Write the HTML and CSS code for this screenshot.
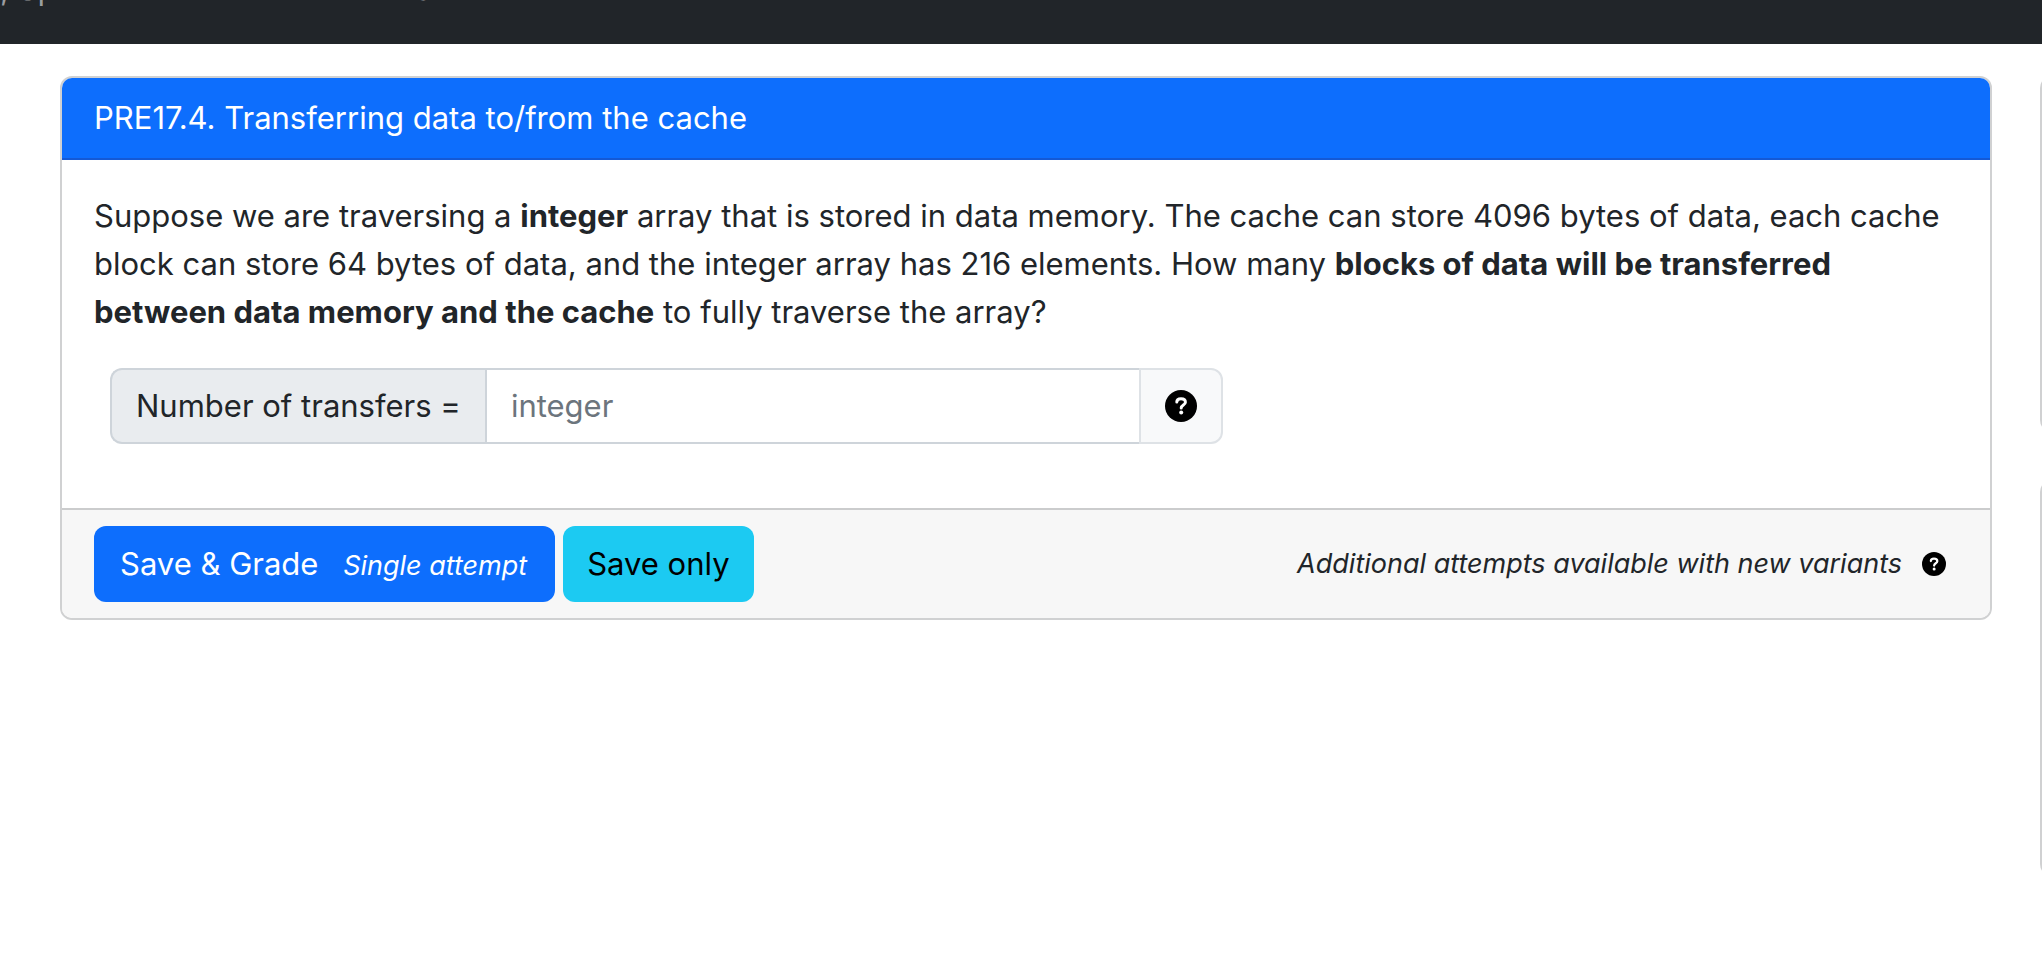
FILE: index.html
```html
<!DOCTYPE html>
<html lang="en">
<head>
<meta charset="utf-8">
<title>PRE17.4. Transferring data to/from the cache</title>
<link rel="stylesheet" href="styles.css">
</head>
<body>
<svg class="sprite" aria-hidden="true">
  <symbol id="question" viewBox="0 0 16 16">
    <circle cx="8" cy="8" r="8" fill="#000"/>
    <path d="M5.9 6C5.9 4.8 6.8 4.4 8 4.4S10.2 5 10.2 6.1C10.2 7.5 8.1 7.5 8.1 9" fill="none" stroke="#fff" stroke-width="1.5" stroke-linecap="round"/>
    <circle cx="8.1" cy="11.3" r="1" fill="#fff"/>
  </symbol>
</svg>
<nav class="navbar">
  <span class="navbar-text">, Sp25</span>
  <a class="nav-link" href="#">Assessments</a>
  <a class="nav-link" href="#">Gradebook</a>
</nav>
<div class="layout">
  <main class="card question-card">
    <h1 class="card-header">PRE17.4. Transferring data to/from the cache</h1>
    <form class="question-form">
      <div class="card-body">
        <p class="prompt">Suppose we are traversing a <strong>integer</strong> array that is stored in data memory. The cache can store 4096 bytes of data, each cache block can store 64 bytes of data, and the integer array has 216 elements. How many <strong>blocks of data will be transferred between data memory and the cache</strong> to fully traverse the array?</p>
        <div class="input-group">
          <label class="input-label" for="transfers">Number of transfers =</label>
          <input class="input-field" id="transfers" type="text" placeholder="integer">
          <button class="input-help" type="button" aria-label="Help"><svg class="icon" aria-hidden="true"><use href="#question"/></svg></button>
        </div>
      </div>
      <div class="card-footer">
        <button class="btn btn-primary" type="submit">Save &amp; Grade <small class="attempts">Single attempt</small></button>
        <button class="btn btn-info" type="submit">Save only</button>
        <span class="variants">Additional attempts available with new variants</span>
        <button class="footer-help" type="button" aria-label="About variants"><svg class="icon icon-sm" aria-hidden="true"><use href="#question"/></svg></button>
      </div>
    </form>
  </main>
  <aside class="sidebar">
    <div class="card panel panel-top"></div>
    <div class="card panel panel-bottom"></div>
  </aside>
</div>
</body>
</html>
```
FILE: styles.css
```css
* {
  box-sizing: border-box;
}

body {
  margin: 0;
  background: #fff;
  color: #212529;
  font-family: Inter, "Liberation Sans", sans-serif;
  font-size: 31px;
  line-height: 48px;
}

.sprite {
  display: none;
}

.navbar {
  display: flex;
  align-items: flex-end;
  height: 44px;
  padding-bottom: 31px;
  overflow: hidden;
  background: #212529;
  color: #9b9d9f;
}

.navbar-text {
  margin-right: 44px;
}

.nav-link {
  padding: 0 16px;
  color: inherit;
  text-decoration: none;
}

.layout {
  display: flex;
  align-items: flex-start;
  gap: 48px;
  padding: 32px 0 0 60px;
}

.card {
  border: 2px solid #d0d1d2;
  border-radius: 12px;
  background: #fff;
  overflow: hidden;
}

.question-card {
  flex: 1;
  min-width: 0;
}

.card-header {
  margin: 0;
  padding: 16px 32px;
  border-bottom: 2px solid #1459d5;
  background: #0d6efd;
  color: #fff;
  font-size: 31px;
  font-weight: 400;
}

.card-body {
  padding: 32px 32px 64px;
}

.prompt {
  margin: 0 0 32px;
}

.input-group {
  display: flex;
  margin-left: 16px;
}

.input-label,
.input-field,
.input-help {
  padding: 12px 24px;
  border: 2px solid #ced4da;
  font: inherit;
}

.input-label {
  border-right: 0;
  border-radius: 12px 0 0 12px;
  background: #e9ecef;
  white-space: nowrap;
}

.input-field {
  flex: 0 1 654px;
  min-width: 0;
  border-right: 0;
  background: #fff;
  color: #212529;
}

.input-field::placeholder {
  color: #6c757d;
  opacity: 1;
}

.input-help {
  display: flex;
  align-items: center;
  border-color: #dee2e6;
  border-radius: 0 12px 12px 0;
  background: #f8f9fa;
}

.icon {
  display: block;
  width: 32px;
  height: 32px;
}

.icon-sm {
  width: 24px;
  height: 24px;
}

.card-footer {
  display: flex;
  align-items: center;
  gap: 8px;
  padding: 16px 32px;
  border-top: 2px solid #cbcccd;
  background: #f7f7f7;
}

.btn {
  padding: 14px 26px;
  border: 0;
  border-radius: 12px;
  font: inherit;
}

.btn-primary {
  padding: 14px 28px 14px 26px;
  background: #0d6efd;
  color: #fff;
}

.btn-info {
  padding: 14px 24px;
  background: #1ccaf2;
  color: #000;
}

.attempts {
  margin-left: 16px;
  font-size: 27px;
  font-style: italic;
  line-height: 1;
}

.variants {
  margin-left: auto;
  font-size: 27px;
  font-style: italic;
}

.footer-help {
  padding: 12px;
  border: 0;
  background: none;
}

.sidebar {
  flex: none;
  display: grid;
  gap: 48px;
  align-content: start;
  width: 2px;
  overflow: hidden;
}

.panel {
  width: 600px;
}

.panel-top {
  height: 356px;
}

.panel-bottom {
  height: 396px;
}
```
